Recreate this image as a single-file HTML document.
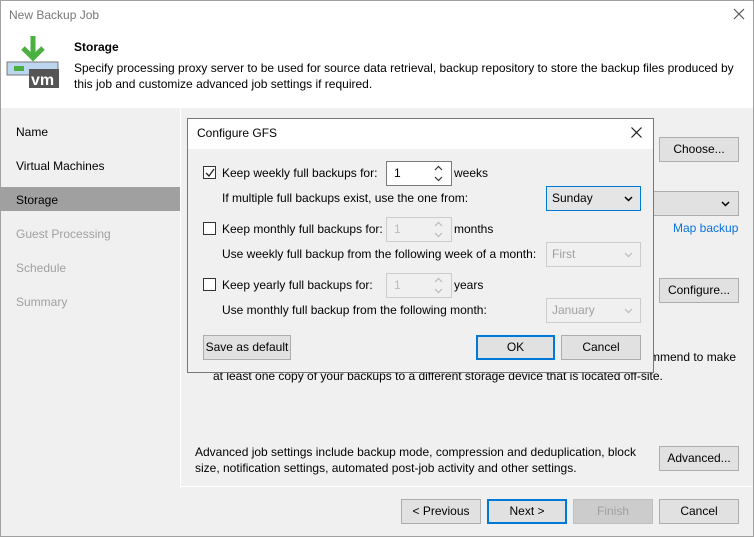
<!DOCTYPE html>
<html><head><meta charset="utf-8"><style>
*{box-sizing:border-box;margin:0;padding:0}
body{width:754px;height:537px;overflow:hidden;font-family:"Liberation Sans",sans-serif;font-size:12px;color:#000;background:#f0f0f0;position:relative}
.a{position:absolute;white-space:nowrap}
.btn{position:absolute;background:#e1e1e1;border:1px solid #adadad;text-align:center;line-height:23px;height:25px}
.dis{color:#a0a0a0}
.sp{position:absolute;width:66px;height:25px;border:1px solid #7a7a7a;background:#fff;padding-left:7px;line-height:23px}
.sp.d{border-color:#ccc;background:#f0f0f0;color:#bbb}
.sp svg{position:absolute;right:8px;top:3px}
.dd{position:absolute;width:95px;height:25px;border:1px solid #ccc;padding-left:5px;line-height:23px;color:#a0a0a0}
.dd svg{position:absolute;right:7px;top:9px}
.cb{position:absolute;width:13px;height:13px;border:1px solid #333;background:#fff}
</style></head><body>
<div class="a" style="left:0;top:0;width:754px;height:537px;border:1px solid #a0a0a0"></div>
<div class="a" style="left:1px;top:1px;width:752px;height:107px;background:#fff"></div>
<div class="a" style="left:9px;top:8px;color:#777">New Backup Job</div>
<svg class="a" style="left:733px;top:8px" width="12" height="12"><path d="M1 1L11 11M11 1L1 11" stroke="#555" stroke-width="1.2"/></svg>
<svg class="a" style="left:6px;top:36px" width="54" height="54" viewBox="0 0 54 54">
<rect x="1" y="26" width="51" height="13" fill="#bcd6f0" stroke="#777"/>
<rect x="8" y="30" width="10" height="5" fill="#4ab040"/>
<rect x="23" y="33" width="30" height="19" fill="#555"/>
<text x="25" y="49" fill="#fff" font-family="Liberation Sans" font-weight="bold" font-size="16">vm</text>
<path d="M27 0v20M17 12l10 10 10-10" stroke="#4ab040" stroke-width="5" fill="none"/>
</svg>
<div class="a" style="left:74px;top:40px;font-weight:bold">Storage</div>
<div class="a" style="left:74px;top:60px;line-height:16px">Specify processing proxy server to be used for source data retrieval, backup repository to store the backup files produced by<br>this job and customize advanced job settings if required.</div>
<div class="a" style="left:180px;top:108px;width:1px;height:380px;background:#fff"></div>
<div class="a" style="left:16px;top:125px">Name</div>
<div class="a" style="left:16px;top:159px">Virtual Machines</div>
<div class="a" style="left:1px;top:187px;width:179px;height:24px;background:#a0a0a0"></div>
<div class="a" style="left:16px;top:193px">Storage</div>
<div class="a dis" style="left:16px;top:227px">Guest Processing</div>
<div class="a dis" style="left:16px;top:261px">Schedule</div>
<div class="a dis" style="left:16px;top:295px">Summary</div>
<div class="btn" style="left:659px;top:137px;width:80px">Choose...</div>
<div class="a" style="left:650px;top:191px;width:89px;height:25px;background:#e1e1e1;border:1px solid #adadad"><svg style="position:absolute;right:8px;top:9px" width="9" height="6"><path d="M1 1l3.5 3.5L8 1" stroke="#000" stroke-width="1.5" fill="none"/></svg></div>
<div class="a" style="left:673px;top:221px;color:#0a72e0">Map backup</div>
<div class="btn" style="left:659px;top:278px;width:80px">Configure...</div>
<div class="a" style="left:650px;top:350px">mmend to make</div>
<div class="a" style="left:213px;top:369px">at least one copy of your backups to a different storage device that is located off-site.</div>
<div class="a" style="left:195px;top:444px;line-height:16px">Advanced job settings include backup mode, compression and deduplication, block<br>size, notification settings, automated post-job activity and other settings.</div>
<div class="btn" style="left:659px;top:446px;width:80px">Advanced...</div>
<div class="a" style="left:181px;top:486px;width:572px;height:1px;background:#fff"></div>
<div class="btn" style="left:401px;top:499px;width:80px">&lt; Previous</div>
<div class="btn" style="left:487px;top:499px;width:80px;border:2px solid #0078d7;line-height:21px">Next &gt;</div>
<div class="btn" style="left:573px;top:499px;width:80px;background:#ccc;border-color:#bfbfbf;color:#a0a0a0">Finish</div>
<div class="btn" style="left:659px;top:499px;width:80px">Cancel</div>
<!-- dialog -->
<div class="a" style="left:187px;top:118px;width:467px;height:255px;border:1px solid #777;background:#f0f0f0"></div>
<div class="a" style="left:188px;top:119px;width:465px;height:30px;background:#fff"></div>
<div class="a" style="left:197px;top:126px">Configure GFS</div>
<svg class="a" style="left:631px;top:127px" width="11" height="11"><path d="M0.5 0.5L10.5 10.5M10.5 0.5L0.5 10.5" stroke="#222" stroke-width="1.2"/></svg>
<div class="cb" style="left:203px;top:166px"><svg style="position:absolute;left:1px;top:1px" width="10" height="10"><path d="M1 5l3 3 5-7" stroke="#222" stroke-width="1.3" fill="none"/></svg></div>
<div class="a" style="left:222px;top:166px">Keep weekly full backups for:</div>
<div class="sp" style="left:386px;top:161px">1<svg width="9" height="17"><path d="M1 5l3.5-3.5L8 5M1 12l3.5 3.5L8 12" stroke="#333" stroke-width="1.2" fill="none"/></svg></div>
<div class="a" style="left:454px;top:166px">weeks</div>
<div class="a" style="left:222px;top:191px">If multiple full backups exist, use the one from:</div>
<div class="dd" style="left:546px;top:186px;border-color:#0078d7;background:#e5e5e5;color:#000">Sunday<svg width="9" height="6"><path d="M1 1l3.5 3.5L8 1" stroke="#000" stroke-width="1.5" fill="none"/></svg></div>
<div class="cb" style="left:203px;top:222px"></div>
<div class="a" style="left:222px;top:222px">Keep monthly full backups for:</div>
<div class="sp d" style="left:386px;top:217px">1<svg width="9" height="17"><path d="M1 5l3.5-3.5L8 5M1 12l3.5 3.5L8 12" stroke="#bbb" stroke-width="1.2" fill="none"/></svg></div>
<div class="a" style="left:454px;top:222px">months</div>
<div class="a" style="left:222px;top:247px">Use weekly full backup from the following week of a month:</div>
<div class="dd" style="left:546px;top:242px">First<svg width="9" height="6"><path d="M1 1l3.5 3.5L8 1" stroke="#bbb" stroke-width="1.2" fill="none"/></svg></div>
<div class="cb" style="left:203px;top:278px"></div>
<div class="a" style="left:222px;top:278px">Keep yearly full backups for:</div>
<div class="sp d" style="left:386px;top:273px">1<svg width="9" height="17"><path d="M1 5l3.5-3.5L8 5M1 12l3.5 3.5L8 12" stroke="#bbb" stroke-width="1.2" fill="none"/></svg></div>
<div class="a" style="left:454px;top:278px">years</div>
<div class="a" style="left:222px;top:303px">Use monthly full backup from the following month:</div>
<div class="dd" style="left:546px;top:298px">January<svg width="9" height="6"><path d="M1 1l3.5 3.5L8 1" stroke="#bbb" stroke-width="1.2" fill="none"/></svg></div>
<div class="btn" style="left:203px;top:335px;width:88px">Save as default</div>
<div class="btn" style="left:476px;top:335px;width:79px;border:2px solid #0078d7;line-height:21px">OK</div>
<div class="btn" style="left:561px;top:335px;width:80px">Cancel</div>
</body></html>
